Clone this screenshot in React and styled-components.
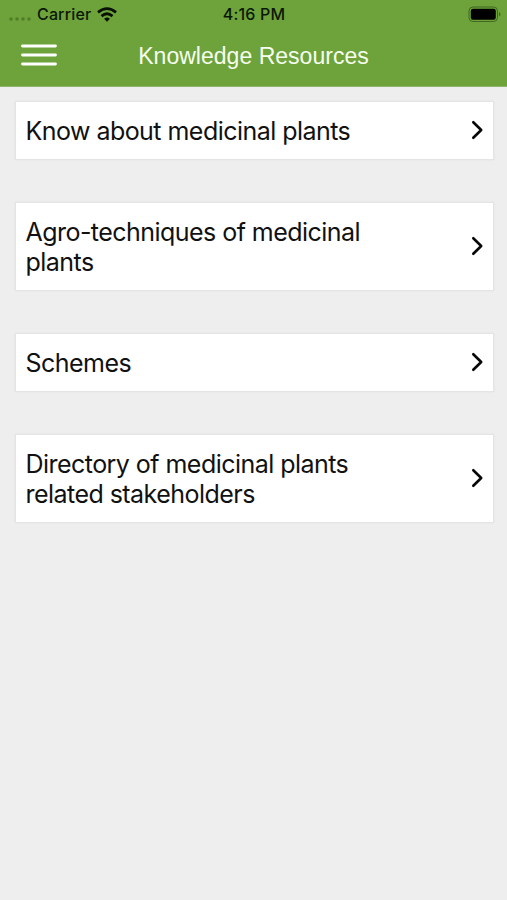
import React from "react";
import styled, { createGlobalStyle } from "styled-components";

const GlobalStyle = createGlobalStyle`
  * { box-sizing: border-box; }
  body { margin: 0; background: #eeeeee; }
  svg { display: block; }
`;

const Screen = styled.div`
  min-height: 900px;
  background: #eeeeee;
  font-family: Inter, "Liberation Sans", sans-serif;
  color: #111;
`;

const Header = styled.header`
  height: 87px;
  background: #6da33a;
  border-bottom: 1px solid #8fb46b;
`;

const StatusBar = styled.div`
  display: grid;
  grid-template-columns: 1fr auto 1fr;
  align-items: center;
  height: 28px;
  padding: 0 6px 0 8px;
  font-size: 16px;
  font-weight: 500;
  line-height: 28px;
  color: #0b1704;
`;

const Carrier = styled.div`
  display: flex;
  align-items: center;
  letter-spacing: 0.15px;
`;

const SignalDots = styled.svg`
  margin: 10px 5px 0 0;
`;

const Wifi = styled.svg`
  margin-left: 6px;
`;

const Clock = styled.time`
  margin-right: 1px;
  letter-spacing: 0.2px;
`;

const Battery = styled.svg`
  justify-self: end;
`;

const NavBar = styled.div`
  display: grid;
  grid-template-columns: 36px 1fr 36px;
  align-items: center;
  height: 54px;
  padding: 0 21px;
`;

const MenuButton = styled.button`
  padding: 0;
  border: 0;
  background: none;
`;

const Title = styled.h1`
  margin: 2px 0 0;
  font: 400 23px/28px "Liberation Sans", Arial, sans-serif;
  letter-spacing: 0.02px;
  text-align: center;
  color: #f7fff0;
`;

const List = styled.main`
  display: flex;
  flex-direction: column;
  gap: 42px;
  padding: 14px 13px 0 15px;
`;

const Card = styled.button`
  display: flex;
  align-items: center;
  justify-content: space-between;
  min-height: 59px;
  padding: 14px 9px 13px 9.5px;
  border: 1px solid #e4e4e4;
  background: #fff;
  box-shadow: 0 0 2px rgba(0, 0, 0, 0.06);
  font: inherit;
  text-align: left;
  color: #111;
`;

const Label = styled.span`
  width: 350px;
  font-size: 25px;
  line-height: 30px;
  letter-spacing: -0.54px;
`;

const ChevronIcon = styled.svg`
  margin-bottom: 3px;
`;

const items = [
  "Know about medicinal plants",
  "Agro-techniques of medicinal plants",
  "Schemes",
  "Directory of medicinal plants related stakeholders",
];

function Chevron() {
  return (
    <ChevronIcon width="14" height="20" viewBox="0 0 14 20" fill="none" stroke="#080808" strokeWidth="2.6" strokeLinecap="round" strokeLinejoin="round">
      <path d="M3.3 2.2 11.2 10l-7.9 7.8" />
    </ChevronIcon>
  );
}

export default function App() {
  return (
    <Screen>
      <GlobalStyle />
      <Header>
        <StatusBar>
          <Carrier>
            <SignalDots width="24" height="5" fill="#4b7825" fillOpacity="0.85">
              <circle cx="3" cy="2" r="1.8" />
              <circle cx="9" cy="2" r="1.8" />
              <circle cx="15" cy="2" r="1.8" />
              <circle cx="21" cy="2" r="1.8" />
            </SignalDots>
            Carrier
            <Wifi width="20" height="15" viewBox="0 0 20 15" fill="none" stroke="#071003" strokeWidth="2.7">
              <path d="M1 5.4Q10-2.2 19 5.4" />
              <path d="M4.5 9.1Q10 4.4 15.5 9.1" />
              <path d="M7.1 11.7Q10 9.3 12.9 11.7L10 14.8Z" fill="#071003" stroke="none" />
            </Wifi>
          </Carrier>
          <Clock>4:16 PM</Clock>
          <Battery width="33" height="17" viewBox="0 0 33 17">
            <rect x="1" y="1" width="28.5" height="14.5" rx="4" fill="none" stroke="#416720" strokeWidth="1" />
            <rect x="2.8" y="2.8" width="25" height="11" rx="2.2" fill="#000" />
            <path d="M31 6v4.5Q32.4 9.5 32.4 8.2T31 6Z" fill="#416720" />
          </Battery>
        </StatusBar>
        <NavBar>
          <MenuButton aria-label="Menu">
            <svg width="36" height="24" stroke="#fff" strokeWidth="2.8" strokeLinecap="round">
              <path d="M1.5 3h33M1.5 12h33M1.5 21h33" />
            </svg>
          </MenuButton>
          <Title>Knowledge Resources</Title>
        </NavBar>
      </Header>
      <List>
        {items.map((label) => (
          <Card key={label}>
            <Label>{label}</Label>
            <Chevron />
          </Card>
        ))}
      </List>
    </Screen>
  );
}
